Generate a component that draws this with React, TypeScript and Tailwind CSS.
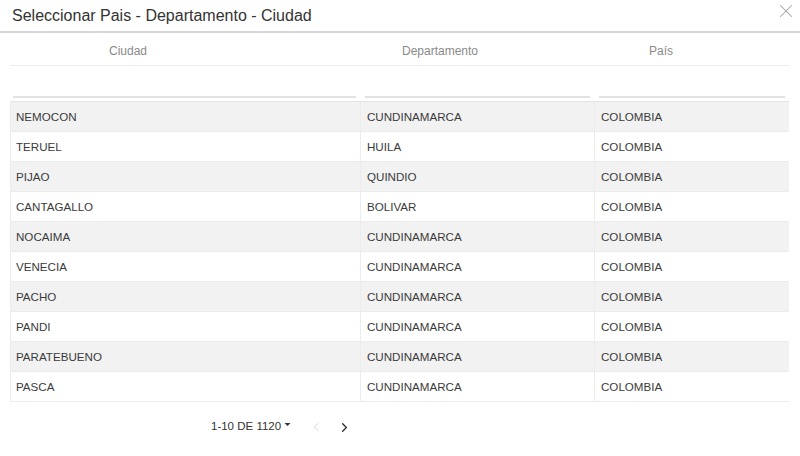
import { ChevronLeft, ChevronRight, X } from 'lucide-react';

const rows: [string, string, string][] = [
  ['NEMOCON', 'CUNDINAMARCA', 'COLOMBIA'],
  ['TERUEL', 'HUILA', 'COLOMBIA'],
  ['PIJAO', 'QUINDIO', 'COLOMBIA'],
  ['CANTAGALLO', 'BOLIVAR', 'COLOMBIA'],
  ['NOCAIMA', 'CUNDINAMARCA', 'COLOMBIA'],
  ['VENECIA', 'CUNDINAMARCA', 'COLOMBIA'],
  ['PACHO', 'CUNDINAMARCA', 'COLOMBIA'],
  ['PANDI', 'CUNDINAMARCA', 'COLOMBIA'],
  ['PARATEBUENO', 'CUNDINAMARCA', 'COLOMBIA'],
  ['PASCA', 'CUNDINAMARCA', 'COLOMBIA'],
];

export default function App() {
  return (
    <div className="w-[800px] h-[456px] bg-white font-['Liberation_Sans',Arial,sans-serif] text-[#333] overflow-hidden">
      {/* Header */}
      <div className="relative h-[31px] flex items-center pl-[12px] pt-[1px]">
        <h1 className="text-[16px] text-[#333]">Seleccionar Pais - Departamento - Ciudad</h1>
        <button className="absolute right-[3px] top-[0px] text-[#a0a0a0]">
          <X size={22} strokeWidth={1.1} />
        </button>
      </div>
      <div className="h-[2px] bg-[#d6d6d6]" />

      {/* Tabla */}
      <div className="ml-[10px] w-[779px]">
        <div className="grid grid-cols-[350px_234px_195px] h-[33px] items-center pt-[3px] border-b border-[#ececec] text-[12px] text-[#8a8a8a]">
          <div className="pl-[99px]">Ciudad</div>
          <div className="pl-[42px]">Departamento</div>
          <div className="pl-[55px]">País</div>
        </div>
        <div className="grid grid-cols-[350px_234px_195px] h-[35px] items-end pb-[3px]">
          <div className="pl-[3px] pr-[4px]"><div className="h-[2px] bg-[#e2e2e2]" /></div>
          <div className="pl-[5px] pr-[4px]"><div className="h-[2px] bg-[#e2e2e2]" /></div>
          <div className="pl-[5px] pr-[4px]"><div className="h-[2px] bg-[#e2e2e2]" /></div>
        </div>
        <div className="border-t border-[#e4e4e4]">
          {rows.map(([c, d, p], i) => (
            <div
              key={c}
              className={`grid grid-cols-[350px_234px_195px] h-[30px] items-center text-[11.6px] text-[#3a3a3a] border-b border-[#ececec] ${
                i % 2 === 0 ? 'bg-[#f2f2f2]' : 'bg-white'
              }`}
            >
              <div className="h-full flex items-center pl-[5px] border-l border-[#ececec]">{c}</div>
              <div className="h-full flex items-center pl-[6px] border-l border-[#ececec]">{d}</div>
              <div className="h-full flex items-center pl-[6px] border-l border-[#ececec]">{p}</div>
            </div>
          ))}
        </div>
      </div>

      {/* Paginación */}
      <div className="flex items-center h-[46px] pl-[211px] pt-[3px] text-[11.5px] text-[#333]">
        <span>1-10 DE 1120</span>
        <svg width="7" height="4" viewBox="0 0 7 4" className="ml-[3px] mb-[3px]">
          <path d="M0.5 0 L6.5 0 L3.5 3 Z" fill="#333" />
        </svg>
        <ChevronLeft size={14} strokeWidth={1.5} className="ml-[18px] text-[#cfcfcf]" />
        <ChevronRight size={15} strokeWidth={2.2} className="ml-[14px] text-[#333] mt-[2px]" />
      </div>
    </div>
  );
}
